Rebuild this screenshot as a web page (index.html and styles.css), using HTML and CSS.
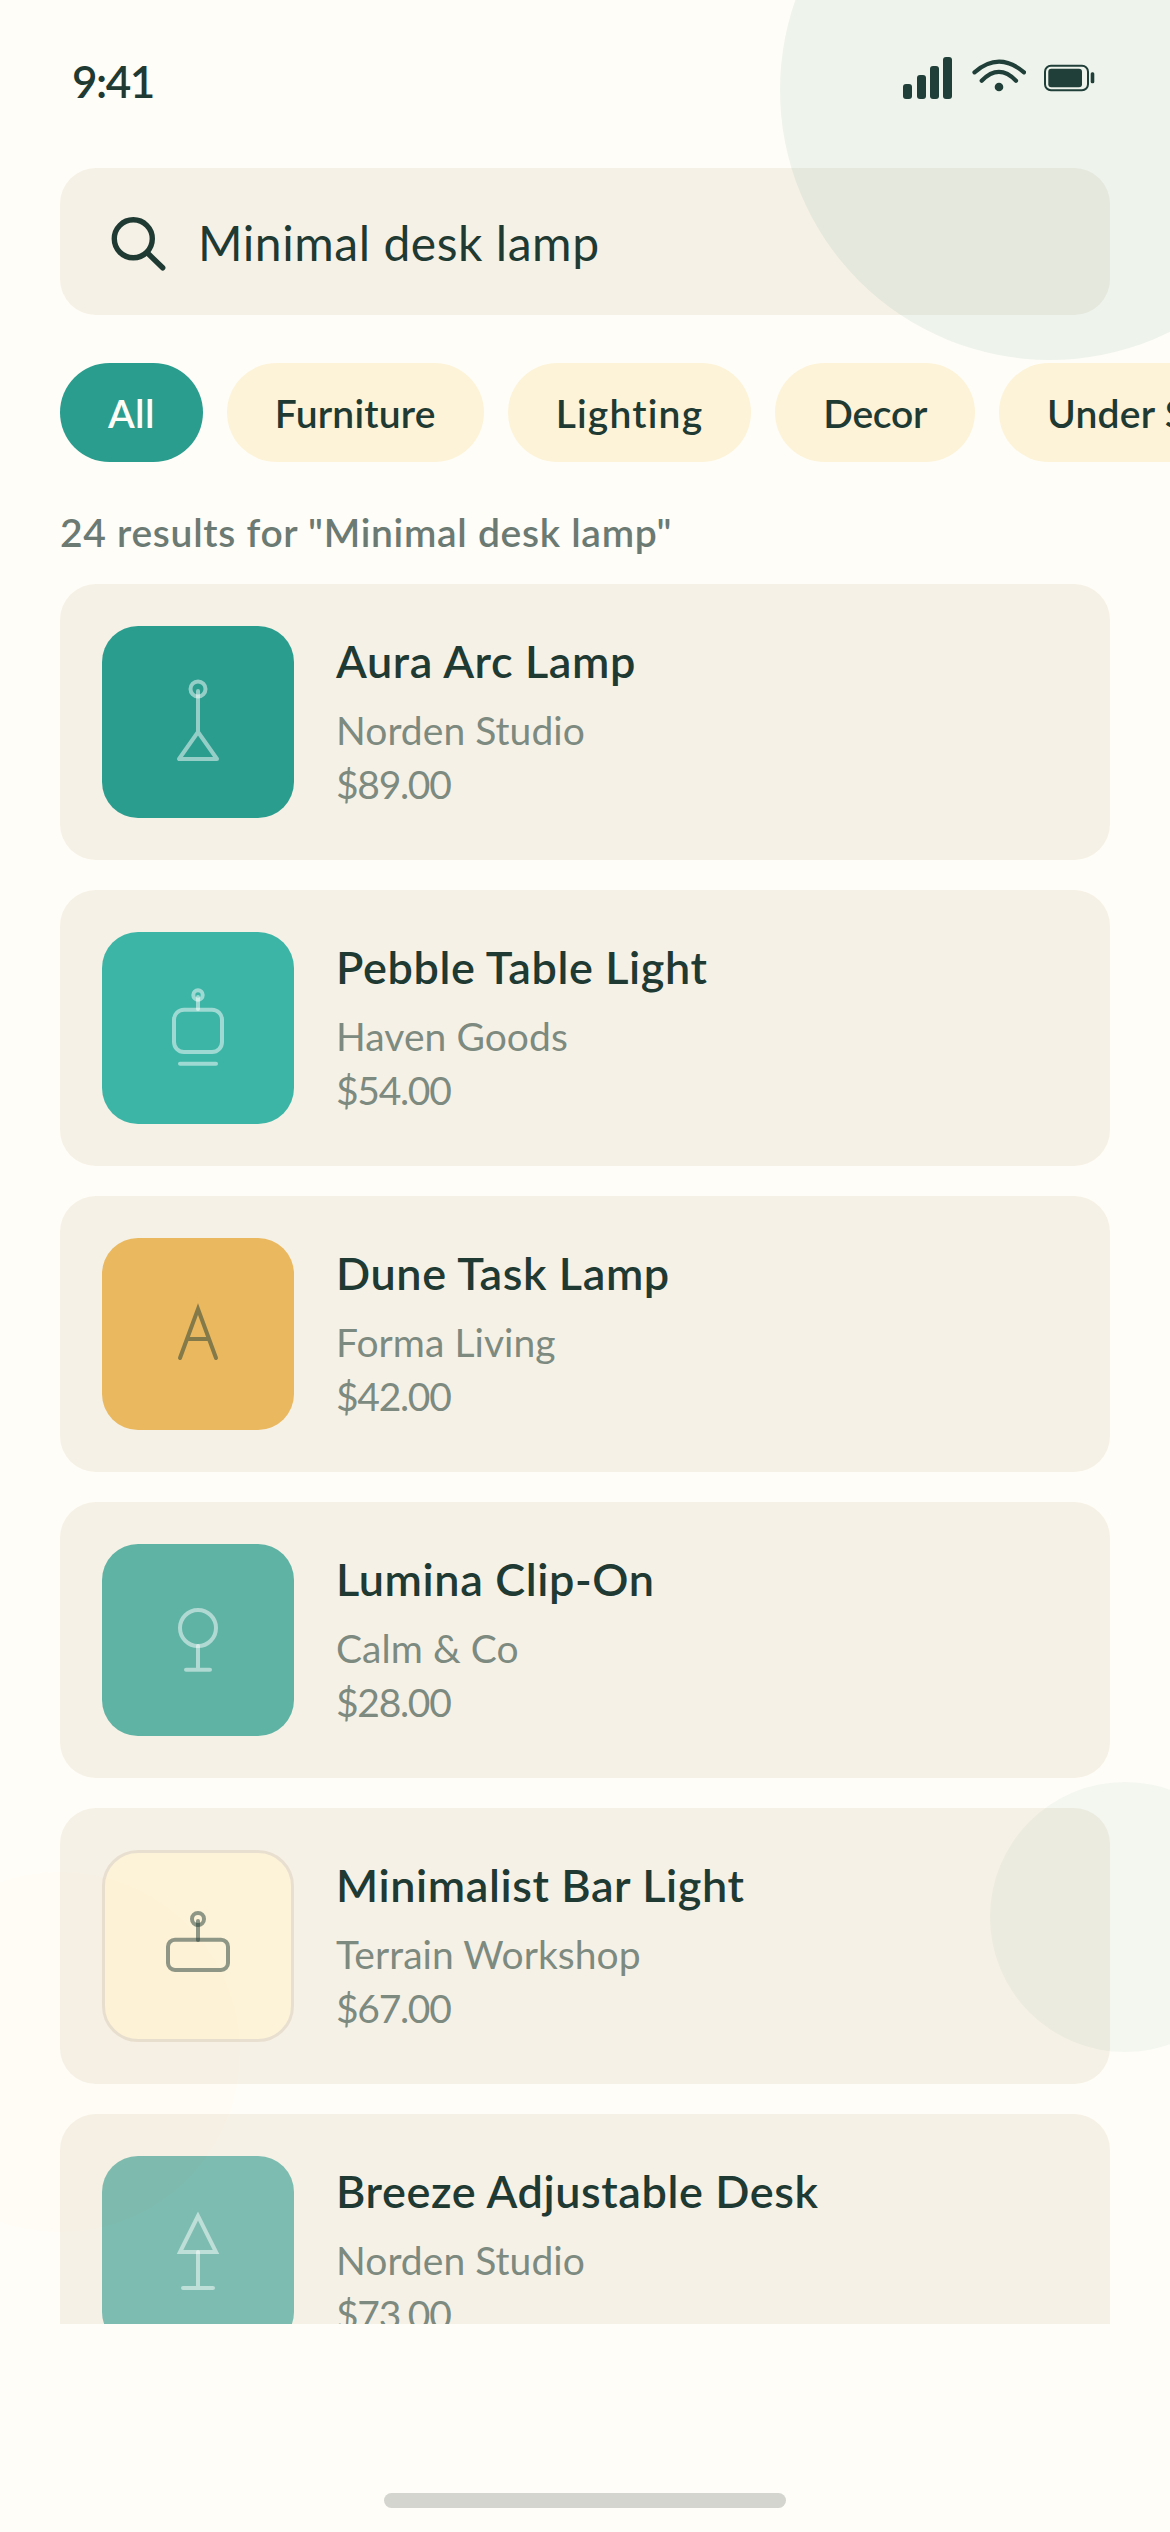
FILE: index.html
```html
<!DOCTYPE html>
<html lang="en">
<head>
<meta charset="utf-8">
<title>Search results</title>
<link rel="stylesheet" href="styles.css">
</head>
<body>
<main class="phone">
  <header class="status">
    <span class="time">9:41</span>
    <div class="status-icons">
      <svg class="sig" width="49" height="42" viewBox="0 0 49 42"><rect x="0" y="27" width="9" height="15" rx="3"/><rect x="14" y="18" width="9" height="24" rx="3"/><rect x="27" y="9" width="9" height="33" rx="3"/><rect x="40" y="0" width="9" height="42" rx="3"/></svg>
      <svg class="wifi" width="54" height="42" viewBox="0 0 54 42"><path class="wifi-arc" d="M2.5 15.3Q27 -6 52 15.3M9.7 23.7Q27 6 44 23.7"/><circle cx="27" cy="30" r="4.3"/></svg>
      <svg class="bat" width="51" height="42" viewBox="0 0 51 42"><rect class="bat-out" x="1" y="8.7" width="43" height="24.6" rx="6"/><rect x="4.3" y="11.7" width="33.7" height="18.6" rx="3"/><rect x="46.7" y="15.3" width="3.6" height="11" rx="1.5"/></svg>
    </div>
  </header>

  <div class="search">
    <svg class="search-icon" width="60" height="60" viewBox="0 0 60 60"><circle cx="25.3" cy="26.8" r="19"/><path d="M40.3 41.8L54.7 55.8"/></svg>
    <span class="query">Minimal desk lamp</span>
  </div>

  <nav class="chips">
    <span class="chip chip-on">All</span>
    <span class="chip">Furniture</span>
    <span class="chip chip-loose">Lighting</span>
    <span class="chip chip-tight">Decor</span>
    <span class="chip">Under $50</span>
  </nav>

  <p class="count">24 results for "Minimal desk lamp"</p>

  <section class="list">
    <article class="card">
      <div class="thumb t1"><svg class="glyph" width="192" height="192" viewBox="0 0 192 192"><circle cx="96" cy="63" r="7.5"/><path d="M96 65V106M96 106L77 133H115Z"/></svg></div>
      <div class="info"><h2 class="name">Aura Arc Lamp</h2><p class="meta">Norden Studio</p><p class="meta price">$89.00</p></div>
    </article>
    <article class="card">
      <div class="thumb t2"><svg class="glyph" width="192" height="192" viewBox="0 0 192 192"><circle cx="96" cy="63" r="4.7"/><path d="M96 65V77"/><rect x="72" y="77.7" width="48" height="42.3" rx="10"/><path d="M78 131.7H114"/></svg></div>
      <div class="info"><h2 class="name">Pebble Table Light</h2><p class="meta">Haven Goods</p><p class="meta price">$54.00</p></div>
    </article>
    <article class="card">
      <div class="thumb t3"><svg class="glyph glyph-dark" width="192" height="192" viewBox="0 0 192 192"><path class="miter" d="M78 120L96 71L114 120M85 101H107"/></svg></div>
      <div class="info"><h2 class="name">Dune Task Lamp</h2><p class="meta">Forma Living</p><p class="meta price">$42.00</p></div>
    </article>
    <article class="card">
      <div class="thumb t4"><svg class="glyph" width="192" height="192" viewBox="0 0 192 192"><circle cx="96" cy="84" r="18"/><path d="M96 102V125.7M84 125.7H108"/></svg></div>
      <div class="info"><h2 class="name">Lumina Clip-On</h2><p class="meta">Calm &amp; Co</p><p class="meta price">$28.00</p></div>
    </article>
    <article class="card">
      <div class="thumb t5"><svg class="glyph glyph-dark" width="192" height="192" viewBox="0 0 192 192"><circle cx="96" cy="69" r="6"/><path d="M96 71V90"/><rect x="66" y="89.7" width="60" height="30.3" rx="7"/></svg></div>
      <div class="info"><h2 class="name">Minimalist Bar Light</h2><p class="meta">Terrain Workshop</p><p class="meta price">$67.00</p></div>
    </article>
    <article class="card">
      <div class="thumb t6"><svg class="glyph" width="192" height="192" viewBox="0 0 192 192"><path class="miter" d="M96 60L78 96H114Z"/><path d="M96 96V132M81 132H111"/></svg></div>
      <div class="info"><h2 class="name">Breeze Adjustable Desk</h2><p class="meta">Norden Studio</p><p class="meta price">$73.00</p></div>
    </article>
  </section>

  <div class="home-bar"></div>

  <div class="blob blob-a"></div>
  <div class="blob blob-b"></div>
  <div class="blob blob-c"></div>
</main>
</body>
</html>
```

FILE: styles.css
```css
* { box-sizing: border-box; margin: 0; padding: 0; }
html, body { width: 1170px; height: 2532px; overflow: hidden; background: #fffdf7; }
body { font-family: Lato, "Noto Sans", sans-serif; color: #1f3a33; font-variant-ligatures: none; }

.phone { position: relative; width: 1170px; height: 2532px; display: flex; flex-direction: column; overflow: hidden; background: #fffdf7; }

.status { height: 168px; padding: 57px 75px 0 72px; display: flex; justify-content: space-between; align-items: flex-start; }
.time { font-size: 44px; font-weight: 600; line-height: 44px; margin-top: 2px; letter-spacing: -1.5px; }
.status-icons { display: flex; }
.status-icons svg { fill: #1f3a33; display: block; }
.wifi { margin-left: 20px; }
.bat { margin-left: 18px; }
.wifi-arc { fill: none; stroke: #1f3a33; stroke-width: 4.2; stroke-linecap: round; }
.bat-out { fill: none; stroke: #1f3a33; stroke-width: 2; }

.search { margin: 0 60px; height: 147px; background: #f6f1e6; border-radius: 36px; display: flex; align-items: center; padding-left: 48px; gap: 30px; }
.search-icon { fill: none; stroke: #1f3a33; stroke-width: 5.4; stroke-linecap: round; flex-shrink: 0; }
.query { font-size: 48px; letter-spacing: 0.55px; padding-top: 2px; }

.chips { margin: 48px 0 0 60px; display: flex; gap: 24px; overflow: hidden; }
.chip { flex-shrink: 0; height: 99px; padding: 0 48px; border-radius: 50px; background: #fdf3d8; font-size: 39px; font-weight: 600; display: flex; align-items: center; letter-spacing: 0.2px; }
.chip-on { background: #2a9d8f; color: #fffdf7; letter-spacing: 0.4px; }
.chip-loose { letter-spacing: 1.2px; }
.chip-tight { letter-spacing: -0.3px; }

.count { margin: 48px 60px 0; height: 44px; line-height: 44px; font-size: 39px; font-weight: 600; color: #6b7a73; letter-spacing: 0.7px; }

.list { margin: 30px 60px 0; height: 1740px; overflow: hidden; display: flex; flex-direction: column; gap: 30px; }
.card { flex-shrink: 0; height: 276px; background: #f6f1e6; border-radius: 36px; padding: 42px; display: flex; gap: 42px; }
.thumb { width: 192px; height: 192px; border-radius: 36px; display: flex; align-items: center; justify-content: center; flex-shrink: 0; }
.t1 { background: #2a9d8f; }
.t2 { background: #3cb5a6; }
.t3 { background: #e9b85f; }
.t4 { background: #5eb3a4; }
.t5 { background: #fdf3d8; border: 3px solid #e8dfd0; }
.t6 { background: #7dbcb0; }
.glyph { fill: none; stroke: #fff; stroke-opacity: 0.5; stroke-width: 4; stroke-linecap: round; stroke-linejoin: round; flex-shrink: 0; }
.glyph-dark { stroke: #1f3a33; }
.miter { stroke-linejoin: miter; }

.info { padding-top: 8px; }
.name { font-size: 45px; font-weight: 600; line-height: 54px; margin-bottom: 15px; letter-spacing: 0.6px; }
.meta { font-size: 39px; line-height: 54px; color: #7d8a80; letter-spacing: 0.05px; }
.price { letter-spacing: -1.3px; }

.home-bar { position: absolute; left: 384px; top: 2493px; width: 402px; height: 15px; border-radius: 9px; background: #d4d5ce; }

.blob { position: absolute; border-radius: 50%; pointer-events: none; }
.blob-a { left: 780px; top: -180px; width: 540px; height: 540px; background: rgba(42, 128, 110, 0.08); }
.blob-b { left: 990px; top: 1782px; width: 270px; height: 270px; background: rgba(42, 128, 110, 0.05); }
.blob-c { left: -120px; top: 1872px; width: 360px; height: 360px; background: rgba(233, 184, 95, 0.012); }
```
